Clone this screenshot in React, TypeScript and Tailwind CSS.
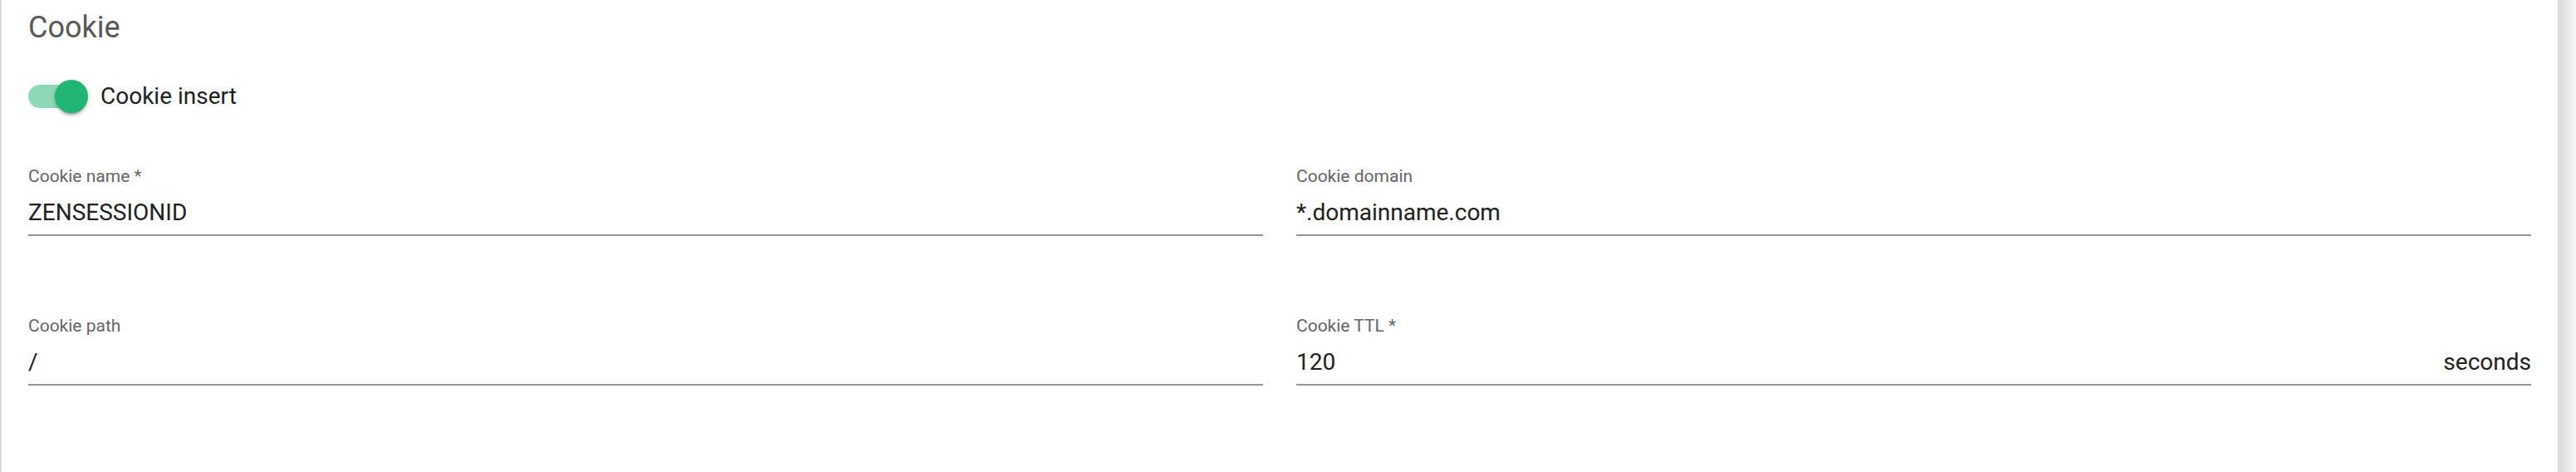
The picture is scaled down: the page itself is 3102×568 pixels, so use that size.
import React from 'react'

interface FieldProps {
  label: string
  value: string
  suffix?: string
}

const Field = ({ label, value, suffix }: FieldProps) => (
  <div className="flex flex-col pt-[2px]">
    <span className="text-[21px] leading-[21px] text-[#666666]">{label}</span>
    <div className="mt-[19px] flex items-center border-b-2 border-[#949494] pb-[12px]">
      <span className="flex-1 text-[28px] leading-[28px] text-[#212121]">{value}</span>
      {suffix ? <span className="text-[28px] leading-[28px] text-[#212121]">{suffix}</span> : null}
    </div>
  </div>
)

const Toggle = () => (
  <span className="relative flex h-10 w-[72px] items-center">
    <span className="h-7 w-[68px] rounded-full bg-[#8ed8b6]" />
    {/* thumb sits over the track */}
    <span className="absolute left-8 top-0 h-10 w-10 rounded-full bg-[#21b573] shadow-[0_4px_2px_-2px_rgba(0,0,0,0.2),0_2px_4px_0_rgba(0,0,0,0.14),0_2px_6px_0_rgba(0,0,0,0.12)]" />
  </span>
)

export default function App() {
  return (
    <div className="flex h-[568px] w-full overflow-hidden bg-[#f6f6f6] font-['Roboto',sans-serif]">
      <section className="flex-1 border-l-2 border-[#dcdcdc] bg-white px-8 pt-[15px]">
        <h2 className="text-[36px] leading-[36px] text-[#585858]">Cookie</h2>

        <label className="mt-[45px] flex h-10 items-center">
          <Toggle />
          <span className="ml-[15px] text-[28px] leading-[28px] text-[#212121]">Cookie insert</span>
        </label>

        <div className="mt-16 grid grid-cols-2 gap-x-10 gap-y-24">
          <Field label="Cookie name *" value="ZENSESSIONID" />
          <Field label="Cookie domain" value="*.domainname.com" />
          <Field label="Cookie path" value="/" />
          <Field label="Cookie TTL *" value="120" suffix="seconds" />
        </div>
      </section>
      <div className="w-[22px] bg-linear-to-r from-[#d9d9d9] to-[#f7f7f7]" />
    </div>
  )
}
